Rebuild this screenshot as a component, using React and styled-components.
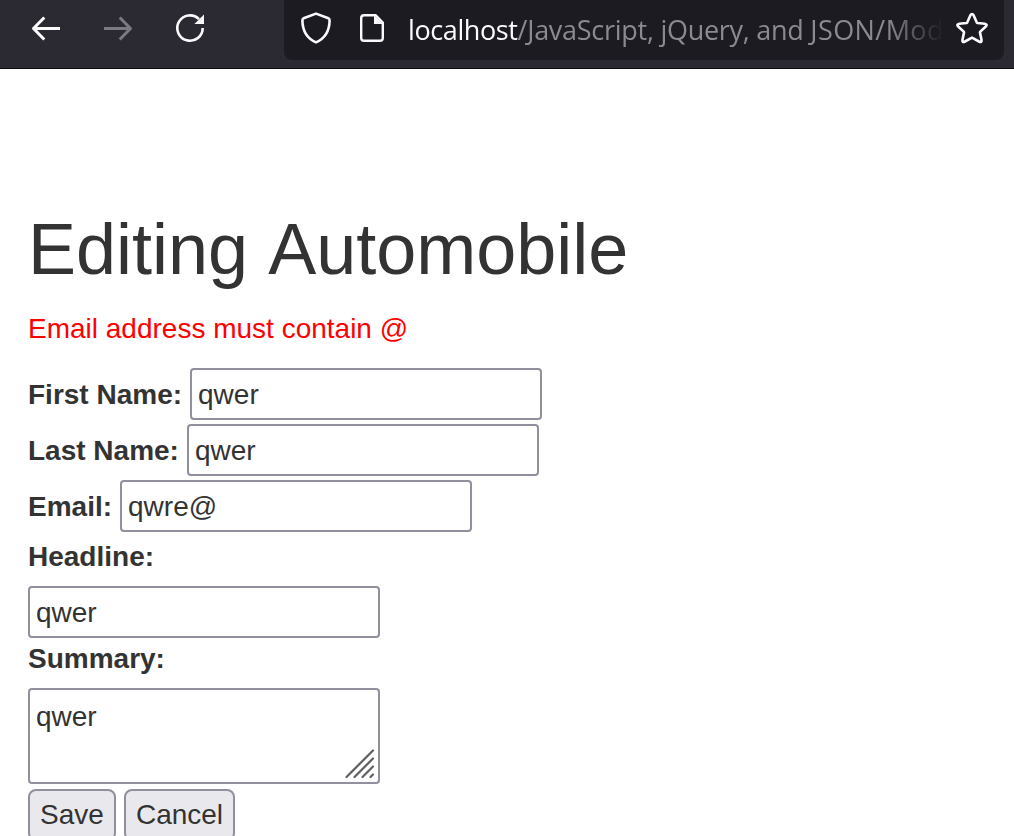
import React from "react";
import styled, { createGlobalStyle } from "styled-components";

const GlobalStyle = createGlobalStyle`
  * { box-sizing: border-box; }
  body { margin: 0; background: #fff; overflow: hidden; }
`;

const Window = styled.div`
  height: 836px;
  overflow: hidden;
  font: 28px/40px "Liberation Sans", Arial, sans-serif;
  font-kerning: none;
  color: #333;
`;

const Toolbar = styled.header`
  display: flex;
  align-items: flex-start;
  height: 69px;
  padding-right: 10px;
  background: #2b2a33;
  border-bottom: 1px solid #0c0c0d;
`;

const NavButtons = styled.nav`
  display: flex;
  gap: 40px;
  width: 284px;
  padding: 12px 0 0 30px;
`;

const Icon = styled.svg`
  display: block;
  flex: none;
  width: 32px;
  height: 32px;
  fill: none;
  stroke: ${(p) => p.$color || "#fbfbfe"};
  stroke-width: 3;
`;

const AddressBar = styled.div`
  display: flex;
  flex: 1;
  min-width: 0;
  height: 60px;
  padding: 12px 16px 0;
  background: #1c1b22;
  border-radius: 0 0 8px 8px;
`;

const PageIcon = styled(Icon)`
  margin-left: 24px;
`;

const Url = styled.div`
  flex: 1;
  min-width: 0;
  height: 40px;
  margin: -2px 12px 0 20px;
  white-space: nowrap;
  font-family: "Open Sans", "Noto Sans", sans-serif;
  font-size: 27px;
  letter-spacing: -0.27px;
  color: #8b8a90;
  mask-image: linear-gradient(to left, transparent, #000 56px);
`;

const Host = styled.span`
  color: #fbfbfe;
  letter-spacing: -0.4px;
`;

const PathEnd = styled.span`
  letter-spacing: 0.4px;
`;

const Content = styled.main`
  padding: 141px 28px 0;
`;

const Title = styled.h1`
  margin: 0 0 20px;
  font-size: 72px;
  font-weight: 400;
  line-height: 79px;
`;

const ErrorText = styled.p`
  margin: 0 0 19px;
  color: #f00;
`;

const Form = styled.form`
  display: flex;
  flex-direction: column;
`;

const Row = styled.div`
  display: flex;
  align-items: center;
  gap: 8px;
  height: 52px;
  margin-bottom: 4px;
`;

const Label = styled.label`
  padding-top: 2px;
  font-weight: 700;
`;

const BlockLabel = styled(Label)`
  padding-top: 1px;
  margin-bottom: 9px;
`;

const Input = styled.input`
  width: 352px;
  height: 52px;
  padding: 2px 6px 0;
  border: 2px solid #8f8f9d;
  border-radius: 4px;
  background: #fff;
  color: inherit;
  font: inherit;
  outline: none;
`;

const AreaWrap = styled.div`
  position: relative;
  width: 352px;
  height: 96px;
`;

const Area = styled.textarea`
  display: block;
  width: 100%;
  height: 100%;
  padding: 7px 6px 0;
  border: 2px solid #8f8f9d;
  border-radius: 4px;
  background: #fff;
  color: inherit;
  font: inherit;
  resize: none;
  overflow: hidden;
  outline: none;
`;

const Grip = styled.svg`
  position: absolute;
  right: 4px;
  bottom: 4px;
  width: 32px;
  height: 32px;
  stroke: #606060;
  stroke-width: 2.2;
  stroke-linecap: round;
`;

const Actions = styled.div`
  display: flex;
  gap: 8px;
  margin-top: 5px;
`;

const Button = styled.button`
  width: ${(p) => p.$width}px;
  height: 52px;
  padding: 0;
  border: 2px solid #8f8f9d;
  border-radius: 8px;
  background: #e9e9ed;
  color: inherit;
  font: inherit;
`;

const fields = [
  ["First Name:", "qwer"],
  ["Last Name:", "qwer"],
  ["Email:", "qwre@"],
];

export default function App() {
  return (
    <Window>
      <GlobalStyle />
      <Toolbar>
        <NavButtons>
          <Icon viewBox="0 0 32 32">
            <path d="M30 16.5H3M14.3 5.5 3.5 16.5 14.3 27.5" strokeLinejoin="round" />
          </Icon>
          <Icon viewBox="0 0 32 32" $color="#7b7a82">
            <path d="M2 16.5H29M17.7 5.5 28.5 16.5 17.7 27.5" strokeLinejoin="round" />
          </Icon>
          <Icon viewBox="0 0 32 32">
            <path d="M28.7 16A12.7 12.7 0 1 1 25 7.1" strokeWidth="2.6" />
            <path d="M30 2.4V12H20.4Z" fill="#fbfbfe" stroke="none" />
          </Icon>
        </NavButtons>
        <AddressBar>
          <Icon viewBox="0 0 32 32">
            <path
              d="M16 1.6 28.4 6.2Q29.7 6.8 29.6 8.6C29.4 19 25.2 26.5 16 30.4 6.8 26.5 2.6 19 2.4 8.6Q2.3 6.8 3.6 6.2Z"
              strokeWidth="2.6"
              strokeLinejoin="round"
            />
          </Icon>
          <PageIcon viewBox="0 0 32 32">
            <path
              d="M8 3.2H19.5L26.8 10.5V26Q26.8 28.8 24 28.8H8Q5.2 28.8 5.2 26V6Q5.2 3.2 8 3.2Z"
              strokeWidth="2.4"
              strokeLinejoin="round"
            />
            <path d="M18 3V12H27Z" fill="#fbfbfe" stroke="none" />
          </PageIcon>
          <Url>
            <Host>localhost</Host>/JavaScript, jQuery, and <PathEnd>JSON/Mod</PathEnd>
          </Url>
          <Icon viewBox="0 0 32 32">
            <path
              d="M14.4 3.3Q16 .8 17.6 3.3L20.8 10.4Q21 10.9 21.6 11L28.8 11.8Q31.8 12.3 29.8 14.5L24.3 19.6Q23.9 20 24 20.6L25.5 27.8Q25.9 31 23 29.5L16.5 25.8Q16 25.5 15.5 25.8L9 29.5Q6.1 31 6.5 27.8L8 20.6Q8.1 20 7.7 19.6L2.2 14.5Q.2 12.3 3.2 11.8L10.4 11Q11 10.9 11.2 10.4Z"
              strokeWidth="2.6"
            />
          </Icon>
        </AddressBar>
      </Toolbar>
      <Content>
        <Title>Editing Automobile</Title>
        <ErrorText>Email address must contain @</ErrorText>
        <Form>
          {fields.map(([label, value]) => (
            <Row key={label}>
              <Label>{label}</Label>
              <Input defaultValue={value} />
            </Row>
          ))}
          <BlockLabel>Headline:</BlockLabel>
          <Input defaultValue="qwer" />
          <BlockLabel>Summary:</BlockLabel>
          <AreaWrap>
            <Area defaultValue="qwer" />
            <Grip viewBox="0 0 32 32">
              <path d="M2.5 29 29 2.5M10.5 29 29 10.5M18.5 29 29 18.5M26.5 29 29 26.5" />
            </Grip>
          </AreaWrap>
          <Actions>
            <Button type="button" $width={88}>Save</Button>
            <Button type="button" $width={111}>Cancel</Button>
          </Actions>
        </Form>
      </Content>
    </Window>
  );
}
